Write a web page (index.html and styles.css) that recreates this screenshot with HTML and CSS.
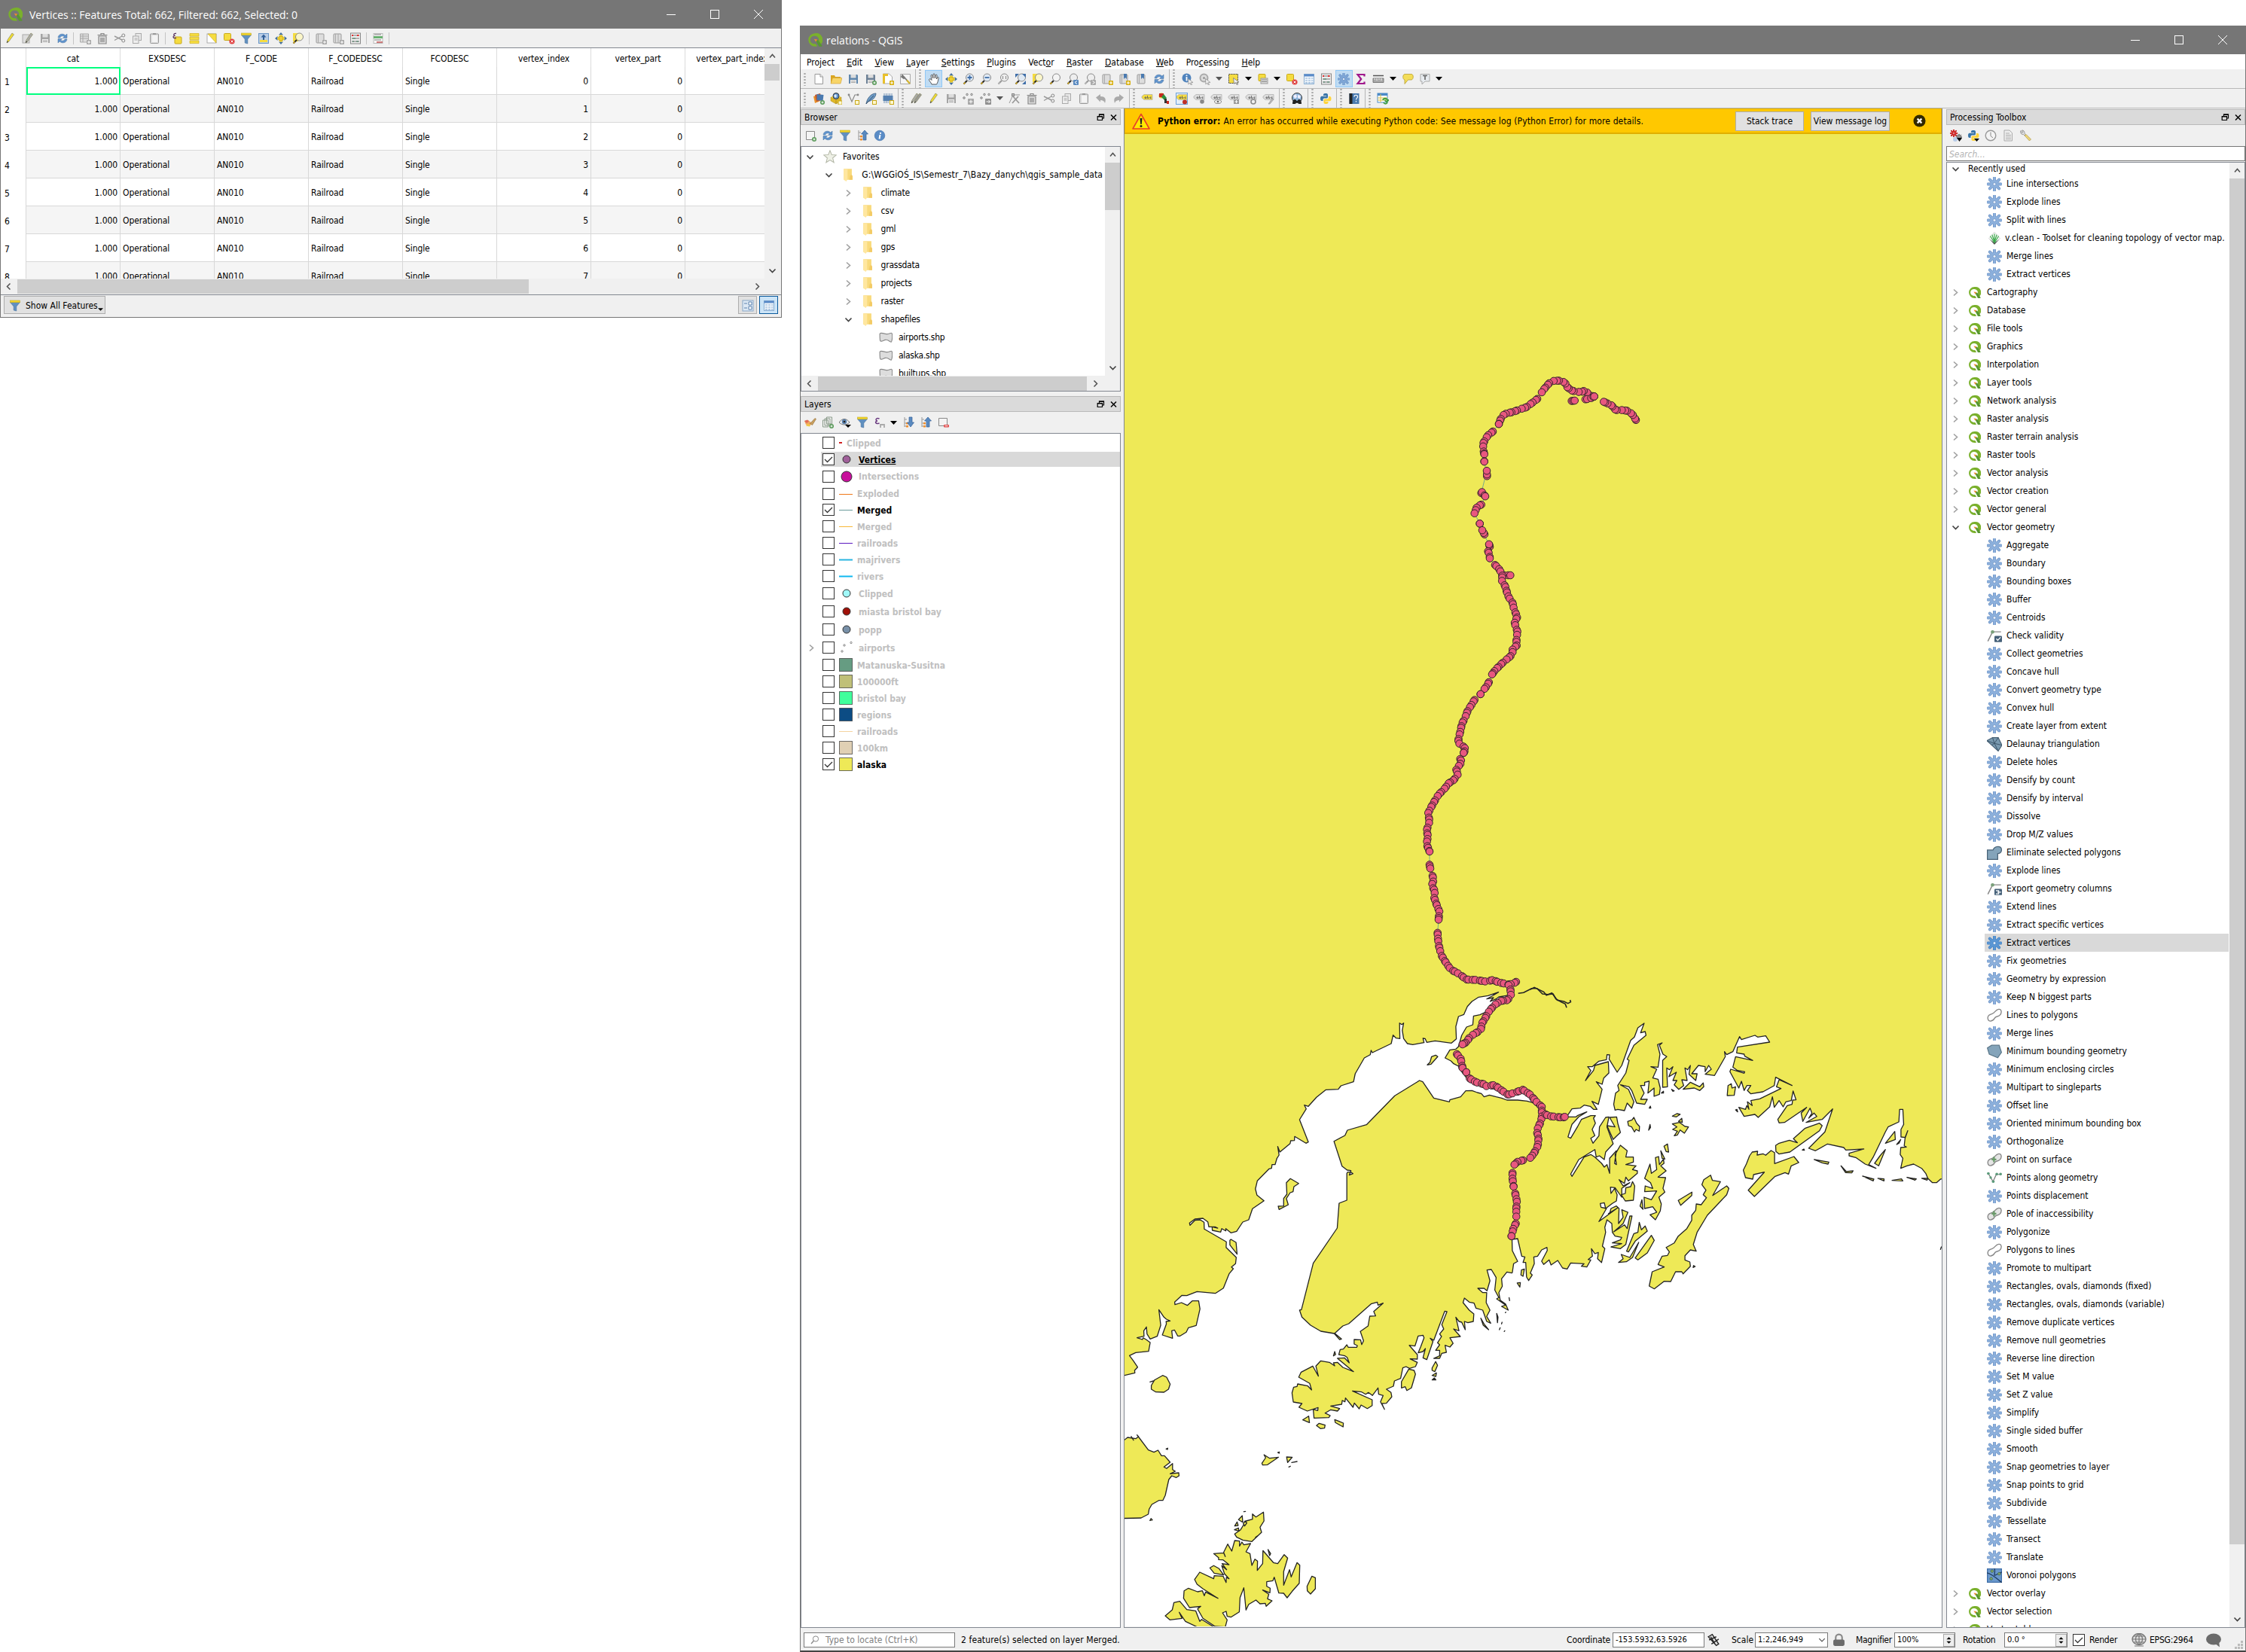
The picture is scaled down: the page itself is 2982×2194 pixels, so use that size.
FILE: index.html
```html
<!DOCTYPE html>
<html lang="en">
<head>
<meta charset="utf-8">
<title>relations - QGIS</title>
<link rel="stylesheet" href="styles.css">
</head>
<body>
<section class="window table-window">
  <header class="titlebar"><svg class="logo" viewBox="0 0 16 16"><use href="#q"/></svg><h1>Vertices :: Features Total: 662, Filtered: 662, Selected: 0</h1><div class="winbtns"><b class="min"></b><b class="max"></b><svg viewBox="0 0 12 12"><path d="M0 0L12 12M12 0L0 12" stroke="#fff" fill="none"/></svg></div></header>
  <div class="toolbar tb-table" data-tools="pencil multiedit savegray refresh | addrow trash cut copy paste | selexpr selall invert deselect filter top move zoomsel | newcol delcol abacus | cond |"></div>
  <div class="grid-frame">
    <div class="grid-view"><table class="grid"><thead></thead><tbody></tbody></table></div>
    <div class="vbar"><svg class="chev"><use href="#up"/></svg><div class="thumb t-table"></div><span class="grow"></span><svg class="chev"><use href="#down"/></svg></div>
  </div>
  <div class="hbar h-table"><svg class="chev"><use href="#left"/></svg><div class="thumb"></div><span class="grow"></span><svg class="chev"><use href="#right"/></svg></div>
  <footer class="table-foot"><button class="showall"><svg class="ic"><use href="#filter"/></svg><span>Show All Features</span><svg class="drop" viewBox="0 0 8 4"><path d="M0 0H8L4 4z"/></svg></button><span class="grow"></span><button class="mode"><svg class="ic"><use href="#form"/></svg></button><button class="mode on"><svg class="ic"><use href="#table"/></svg></button></footer>
</section>

<section class="window main-window">
  <header class="titlebar"><svg class="logo" viewBox="0 0 16 16"><use href="#q"/></svg><h1>relations - QGIS</h1><div class="winbtns"><b class="min"></b><b class="max"></b><svg viewBox="0 0 12 12"><path d="M0 0L12 12M12 0L0 12" stroke="#fff" fill="none"/></svg></div></header>
  <nav class="menu"><span>Pro<u>j</u>ect</span><span><u>E</u>dit</span><span><u>V</u>iew</span><span><u>L</u>ayer</span><span><u>S</u>ettings</span><span><u>P</u>lugins</span><span>Vect<u>o</u>r</span><span><u>R</u>aster</span><span><u>D</u>atabase</span><span><u>W</u>eb</span><span>Pro<u>c</u>essing</span><span><u>H</u>elp</span></nav>
  <div class="toolbar tb-main" data-tools=": new open save saveas layout style || pan* move zoomin zoomout zoom1 zoomfull zoomsel zoomlayer zoomprev zoomnext newmap newmark marks refresh || identify action ^g selrect ^ selform ^ deselect table abacus gearbox* sigma measure ^ tip textnote ^"></div>
  <div class="toolbar tb-main" data-tools=": dsm addvec vnew feather chip || multigray pencil savegray pts ptsadd ^g node trash cut copy paste undo redo || label diagram labelon lab1 lab2 lab3 lab4 lab5 || globe || python || help || sheet"></div>
  <div class="docks">
    <aside class="left">
      <div class="dock-title"><span>Browser</span><svg class="float"><use href="#float"/></svg><svg class="float"><use href="#x"/></svg></div>
      <div class="toolbar tb-dock" data-tools="addlayer refresh filter collapse info"></div>
      <div class="panel browser">
        <div class="row-flex">
          <div class="tree" id="browser"></div>
          <div class="vbar"><svg class="chev"><use href="#up"/></svg><div class="thumb t-browser"></div><span class="grow"></span><svg class="chev"><use href="#down"/></svg></div>
        </div>
        <div class="hbar h-browser"><svg class="chev"><use href="#left"/></svg><div class="thumb"></div><svg class="chev"><use href="#right"/></svg><span class="grow"></span></div>
      </div>
      <div class="dock-title layers-title"><span>Layers</span><svg class="float"><use href="#float"/></svg><svg class="float"><use href="#x"/></svg></div>
      <div class="toolbar tb-dock" data-tools="brush addgroup eye filter eps ^ expand collapse remove"></div>
      <div class="panel layers" id="layers"></div>
    </aside>
    <main class="canvas">
      <div class="message"><svg class="warn" viewBox="0 0 24 22"><path d="M12 1.500L23 21H1z" fill="#ffe900" stroke="#e8402a" stroke-width="1.600" stroke-linejoin="round"/><path d="M10.500 7h3l-.8 8h-1.400z" fill="#222"/><circle cx="12" cy="17.500" r="1.500" fill="#222"/></svg><p><b>Python error:</b><span>An error has occurred while executing Python code: See message log (Python Error) for more details.</span></p><span class="grow"></span><button class="b1">Stack trace</button><button class="b2">View message log</button><svg class="dismiss" viewBox="0 0 18 18"><circle cx="9" cy="9" r="8.500" fill="#332a00"/><path d="M6 6l6 6M12 6l-6 6" stroke="#fff" stroke-width="2.400"/></svg></div>
      <svg class="map" viewBox="1493 178 1085 1982" id="map"></svg>
    </main>
    <aside class="right">
      <div class="dock-title"><span>Processing Toolbox</span><svg class="float"><use href="#float"/></svg><svg class="float"><use href="#x"/></svg></div>
      <div class="toolbar tb-dock" data-tools="gears pydrop clock report wrench"></div>
      <div class="search">Search...</div>
      <div class="panel toolbox">
        <div class="tree" id="toolbox"></div>
        <div class="vbar"><svg class="chev"><use href="#up"/></svg><div class="thumb t-tool"></div><span class="grow"></span><svg class="chev"><use href="#down"/></svg></div>
      </div>
    </aside>
  </div>
  <footer class="status">
    <div class="field locate"><svg viewBox="0 0 12 12"><circle cx="7" cy="4.500" r="3.600" fill="none" stroke="#888"/><path d="M4.500 7L1 11" stroke="#888" stroke-width="1.300"/></svg>Type to locate (Ctrl+K)</div>
    <span class="s-msg">2 feature(s) selected on layer Merged.</span>
    <span class="s-coord">Coordinate</span><div class="field f-coord">-153.5932,63.5926</div>
    <svg class="ic s-ext" viewBox="0 0 16 16"><path d="M1 4l5-3 8 12-3 2zM2 8l9-4M5 13l9-6M4 4l6 10" stroke="#222" stroke-width="1.300" fill="#ddd"/></svg>
    <span class="s-scale">Scale</span><div class="field f-scale">1:2,246,949<svg viewBox="0 0 8 8"><path d="M1 2.500l3 3 3-3" fill="none" stroke="#555"/></svg></div>
    <svg class="ic s-lock" viewBox="0 0 16 16"><path d="M4 8V5a4 4 0 018 0v3" fill="none" stroke="#888" stroke-width="2"/><rect x="1" y="7.500" width="14" height="8" rx="2" fill="#6b6b6b"/></svg>
    <span class="s-mag">Magnifier</span><div class="field f-mag">100%<i class="spin"><svg viewBox="0 0 15 16"><path d="M4 6.500h7L7.500 3zM4 9.500h7L7.500 13z"/></svg></i></div>
    <span class="s-rot">Rotation</span><div class="field f-rot">0.0 °<i class="spin"><svg viewBox="0 0 15 16"><path d="M4 6.500h7L7.500 3zM4 9.500h7L7.500 13z"/></svg></i></div>
    <svg class="box s-box"><use href="#boxon"/></svg><span class="s-render">Render</span>
    <svg class="s-globe" viewBox="0 0 20 18"><ellipse cx="10" cy="8" rx="9" ry="7.500" fill="#ddd" stroke="#777" stroke-width="1.400"/><path d="M1 8h18M3 4h14M3 12h14M10 0v16M10 .5c-6 4-6 11 0 15M10 .5c6 4 6 11 0 15M4 17h12" stroke="#777" fill="none" stroke-width="1.200"/></svg><span class="s-epsg">EPSG:2964</span>
    <svg class="s-bubble" viewBox="0 0 20 19"><ellipse cx="10" cy="8" rx="10" ry="7.500" fill="#6b6b6b"/><path d="M11 13l7 5.500-1-8z" fill="#6b6b6b"/></svg>
    <span class="grow"></span><svg class="s-grip" viewBox="0 0 11 11"><path d="M8 0h3v3H8zM4 4h3v3H4zM8 4h3v3H8zM0 8h3v3H0zM4 8h3v3H4zM8 8h3v3H8z" fill="#bbb"/></svg>
  </footer>
</section>

<svg class="defs"><defs id="defs"></defs></svg>
<script src="app.js"></script>
</body>
</html>
```
FILE: styles.css
```css
* { box-sizing: border-box; }
body { margin: 0; width: 2982px; height: 2194px; overflow: hidden; background: #fff; display: flex; gap: 24px; align-items: flex-start; color: #000; font: 12px/14px "DejaVu Sans Condensed", "DejaVu Sans", "Noto Sans", sans-serif; font-stretch: condensed; }
button { font: inherit; color: inherit; padding: 1px 0 0; margin: 0; border: 1px solid #adadad; background: #e1e1e1; }
svg { display: block; flex: none; }
.defs { position: absolute; width: 0; height: 0; }
.grow { flex: 1; }
.window { background: #f0f0f0; display: flex; flex-direction: column; overflow: hidden; }
.table-window { width: 1038px; height: 422px; border: 1px solid #767676; border-top: 0; }
.main-window { width: 1920px; height: 2160px; margin-top: 34px; border-left: 1px solid #767676; border-right: 1px solid #767676; border-bottom: 2px solid #434343; }

.titlebar { height: 38px; flex: none; background: #767676; color: #fff; display: flex; align-items: center; padding-left: 9px; }
.titlebar h1 { margin: 0 0 0 9px; font: 400 14px/18px "Open Sans", "Noto Sans", sans-serif; flex: 1; white-space: nowrap; padding-top: 1px; }
.main-window .titlebar h1 { margin-left: 5px; }
.logo { width: 20px; height: 20px; }
.winbtns { display: flex; align-items: center; gap: 46px; padding-right: 24px; }
.winbtns .min { width: 12px; border-top: 1px solid #fff; }
.winbtns .max { width: 12px; height: 12px; border: 1px solid #fff; }
.winbtns svg { width: 12px; height: 12px; }

.toolbar { display: flex; align-items: center; flex: none; }
.tool { width: 23px; height: 23px; display: flex; align-items: center; justify-content: center; }
.tool.on { background: #c0dcf3; border: 1px solid #90c8f6; }
.ic, .tool svg { width: 16px; height: 16px; }
.tb-table { height: 26px; padding-left: 1px; border-bottom: 1px solid #828790; }
.bar { width: 7px; height: 16px; border-left: 1px solid #c4c4c4; margin-left: 3px; margin-right: -3px; }
.tb-main { height: 26px; border-bottom: 1px solid #b9b9b9; }
.grip { width: 12px; height: 18px; background: radial-gradient(circle at 50% 50%, #aaa 1px, transparent 1.400px) 4px 0 / 3px 4px repeat-y; }
.group { width: 15px; height: 25px; border-left: 1px solid #b5b5b5; margin-left: 2px; margin-right: -2px; background: radial-gradient(circle at 50% 50%, #aaa 1px, transparent 1.400px) 4px 3px / 3px 4px repeat-y; }
.tool.dd { width: 15.500px; }
.tool.dd svg { width: 9px; height: 5px; }
.tb-dock { height: 28px; padding-left: 1px; }

.grid-frame { display: flex; height: 306px; flex: none; }
.grid-view { width: 1014px; overflow: hidden; background: #fff; letter-spacing: -.1px; }
.grid { border-collapse: separate; border-spacing: 0; table-layout: fixed; width: 1034px; }
.grid th { font-weight: 400; height: 25px; padding: 2px 0 0; border-right: 1px solid #dcdcdc; white-space: nowrap; }
.grid td { height: 37px; padding: 2px 3px 0; border-right: 1px solid #d8d8d8; border-bottom: 1px solid #d8d8d8; width: 125px; }
.grid th:first-child, .grid td:first-child { width: 34px; border-bottom: 0; background: #fff; padding: 2px 5px 0; text-align: left; }
.grid tr:nth-child(even) td { background: #f5f5f5; }
.grid tr:nth-child(even) td:first-child { background: #fff; }
.grid .num { text-align: right; }
.grid .cur { outline: 2px solid #00ff7f; outline-offset: -2px; }

.vbar { width: 20px; flex: none; background: #f0f0f0; display: flex; flex-direction: column; align-items: center; padding: 5px 0; }
.chev { width: 11px; height: 11px; }
.thumb { background: #cdcdcd; }
.vbar .thumb { width: 100%; margin-top: 5px; }
.t-table { height: 22px; }
.t-browser { height: 63px; }
.t-tool { height: 1814px; }
.hbar { height: 20px; background: #f0f0f0; display: flex; align-items: center; flex: none; padding: 0 6px 0 5px; }
.hbar .thumb { height: 19px; margin: 0 6px; }
.h-table { border-bottom: 1px solid #828790; padding-right: 26px; height: 22px; }
.h-table .thumb { width: 679px; }
.h-browser .thumb { width: 357px; }
.table-foot { flex: 1; display: flex; align-items: flex-start; padding: 1px 4px 0 4px; gap: 3px; }
.showall { width: 135px; height: 24px; display: flex; align-items: center; padding-left: 6px; gap: 6px; position: relative; white-space: nowrap; }
.showall .drop { position: absolute; right: 2px; bottom: 3px; width: 7px; height: 4px; }
.mode { width: 25px; height: 24px; display: flex; align-items: center; justify-content: center; }
.mode.on { background: #cce4f7; border: 1px solid #0a5a9c; }

.menu { height: 20px; background: #fff; display: flex; align-items: center; padding: 2px 0 0 8px; gap: 16.300px; flex: none; }
.docks { flex: 1; display: flex; min-height: 0; padding-top: 1px; }
.left { width: 425px; display: flex; flex-direction: column; margin-right: 4px; }
.right { width: 397px; display: flex; flex-direction: column; margin-left: 5px; }
.dock-title { height: 21px; flex: none; background: #dadada; border: 1px solid #b9b9b9; display: flex; align-items: center; padding: 0 3px 0 4px; gap: 6px; }
.dock-title span { flex: 1; padding-top: 1px; }
.layers-title { margin-top: 6px; }
.float { width: 11px; height: 10px; }
.panel { background: #fff; border: 1px solid #828790; overflow: hidden; }
.browser { height: 326px; flex: none; display: flex; flex-direction: column; }
.row-flex { display: flex; height: 304px; }
.tree { flex: 1; overflow: hidden; }
.row { height: 24px; display: flex; align-items: center; white-space: nowrap; }
.row .chev { margin-right: 12px; }
.row .chev.none { visibility: hidden; }
.row .ic { margin-right: 8px; }
#browser { padding-top: 1px; }
#browser .row .ic { width: 18px; height: 18px; }
#browser .row:nth-child(2) span { letter-spacing: .14px; }
#browser .row:nth-child(n+3) span { letter-spacing: -.25px; }
.layers { flex: 1; }
.layer { display: flex; align-items: center; font-weight: 700; color: #c0c0c0; padding-left: 8px; white-space: nowrap; }
.layer span { padding-top: 1px; }
.layer.shown { color: #000; }
.layer.sel { background: linear-gradient(#d9d9d9, #d9d9d9) 26px 0 no-repeat; text-decoration: underline; }
.layer .chev { margin-right: 9px; }
.layer .chev.none { visibility: hidden; }
.box { width: 16px; height: 16px; }
.layer .sym { margin: 0 6px; width: 18px; height: 18px; }
.layer .sym.pt { margin: 0 7px; width: 18px; }
.layer .sym.tiny { width: 6px; margin: 0 5px; }

.canvas { flex: 1; display: flex; flex-direction: column; border-left: 1px solid #828790; border-right: 1px solid #828790; border-bottom: 1px solid #828790; min-width: 0; margin-top: -1px; }
.message { height: 34px; flex: none; background: #ffc800; border: 1px solid #e0af00; border-bottom-width: 2px; display: flex; align-items: center; padding: 0 20px 0 9px; letter-spacing: .12px; }
.warn { width: 24px; height: 22px; }
.message p { margin: 0 0 0 10px; padding-top: 1px; white-space: nowrap; }
.message p span { margin-left: 4px; }
.message button { height: 26px; letter-spacing: 0; }
.b1 { width: 91px; }
.message .b2 { width: 105px; margin-left: 9px; margin-right: 31px; white-space: nowrap; }
.dismiss { width: 17px; height: 17px; }
.map { width: 1085px; height: 1982px; background: #eee957; }
.land { fill: #eee957; stroke: #232323; stroke-width: 1.300; stroke-linejoin: round; }
.sea { fill: #fff; stroke: #232323; stroke-width: 1.300; stroke-linejoin: round; }
.rail { fill: none; stroke: #7aa98c; stroke-width: 1; }
.river { fill: none; stroke: #232323; stroke-width: 1.600; }
.vertex { fill: #e8577f; stroke: #33232a; stroke-width: 1; }

.search { height: 20px; flex: none; border: 1px solid #767676; background: #fff; color: #b4b4b4; font-style: italic; padding: 3px 3px 0; }
.toolbox { flex: 1; display: flex; margin-top: 1px; min-height: 0; }
#toolbox { overflow: hidden; }
#toolbox .row { flex: none; }
#toolbox .row.first { height: 16px; }
#toolbox .row .chev { margin-right: 11px; }
#toolbox .hit { background: #d9d9d9; }
#toolbox .cat .ic { width: 17px; height: 17px; margin-right: 8px; }
#toolbox .alg { margin-left: 50px; padding-left: 3px; margin-right: 1px; }
#toolbox .alg .ic { width: 20px; height: 19px; margin-right: 6px; }
#toolbox .alg:nth-child(5) { letter-spacing: .1px; }
#toolbox .alg:nth-child(5) .ic { margin-right: 4px; }

.status { height: 30px; flex: none; display: flex; align-items: center; padding: 2px 3px 0 4px; white-space: nowrap; }
.field { height: 20px; background: #fff; border: 1px solid #7a7a7a; display: flex; align-items: center; padding-left: 3px; font-size: 11px; }
.locate { width: 201px; color: #808080; padding-left: 8px; gap: 8px; font-size: 12px; }
.locate svg { width: 12px; height: 12px; }
.s-msg { width: 812px; padding-left: 8px; letter-spacing: .1px; }
.s-coord { width: 61px; letter-spacing: -.1px; }
.f-coord { width: 122px; }
.s-ext { margin: 0 15px 0 4px; }
.s-ext, .s-lock { width: 17px; height: 18px; }
.s-scale { width: 31px; }
.f-scale { width: 97px; justify-content: space-between; }
.f-scale svg { width: 10px; height: 10px; margin-right: 2px; }
.s-lock { margin: 0 14px 0 6px; }
.s-mag { width: 51px; letter-spacing: -.3px; }
.f-mag { width: 81px; justify-content: space-between; }
.spin { width: 15px; height: 17px; background: #eee; border: 1px solid #aaa; }
.spin svg { width: 13px; height: 15px; }
.s-rot { width: 65px; padding-left: 10px; letter-spacing: -.2px; }
.f-rot { width: 84px; justify-content: space-between; }
.s-box { margin: 0 6px 0 7px; }
.s-render { width: 56px; letter-spacing: -.2px; }
.s-globe { width: 20px; height: 18px; }
.s-epsg { width: 79px; padding-left: 4px; letter-spacing: -.2px; }
.s-bubble { width: 20px; height: 19px; }
.s-grip { width: 11px; height: 11px; align-self: flex-end; margin-bottom: 2px; }
```
FILE: app.js
```js
// Icon artwork, all on a 16 x 16 grid unless a viewBox is given.
const mag = (c, extra = '') => `<path d="M6 10L1.500 14.500" stroke="#2b2b2b" stroke-width="2.200"/><path d="M3.500 12.500l-2 2" stroke="#f0c020" stroke-width="1.500"/><circle cx="9.500" cy="6" r="5" fill="${c}" stroke="#888"/>${extra}`;
const disk = (a, extra = '') => `<path d="M2 2h11l1 1v11H2z" fill="${a}"/><rect x="4.500" y="2" width="7" height="4.500" fill="#ddd"/><rect x="4" y="9" width="8" height="5" fill="#eee"/><path d="M5 10.800h6M5 12.500h6" stroke="#999" stroke-width=".8"/>${extra}`;
const star = '<rect x="10" y="10" width="6" height="6" rx="1" fill="#d8b010"/><path d="M13 11v4M11 13h4" stroke="#fff"/>';
const gstar = '<rect x="10" y="10" width="6" height="6" rx="1" fill="#a8a8a8"/><path d="M13 11v4M11 13h4" stroke="#fff"/>';
const plus = '<circle cx="13" cy="13" r="3" fill="#5a9a5a"/><path d="M13 11.500v3M11.500 13h3" stroke="#fff"/>';
const teeth = [0, 45, 90, 135].map(a => `<path d="M8 1V15" transform="rotate(${a} 8 8)"/>`).join('');
const gear = (c, d) => `<g stroke="${d}" stroke-width="3.200" stroke-linecap="round">${teeth}</g><circle cx="8" cy="8" r="4.600" fill="${d}"/><g stroke="${c}" stroke-width="2.200" stroke-linecap="round">${teeth}</g><circle cx="8" cy="8" r="4.200" fill="${c}"/><circle cx="8" cy="8" r="1.600" fill="#eef4fb" stroke="${d}" stroke-width=".7"/>`;
const tag = (c, e = '') => `<path d="M1 5l3-2.500h11v7H4L1 7z" fill="${c}" stroke="#aaa" stroke-width=".7"/><path d="M5 6h2v1.500H5zM8.500 4v3.500h1.500V6M13.500 6H12v1.500h1.500" fill="none" stroke="#555" stroke-width=".8"/>${e}`;
const doc = e => `<rect x="2" y="2" width="10" height="12" rx="1" fill="#ddd" stroke="#999"/><path d="M4.500 2v12" stroke="#aaa"/>${e}`;
const py = '<path d="M8 1C5 1 5 2 5 4h4v.8H3C1.500 5 1 6 1 8s.7 3 2 3h1.500V9.500C4.500 8 5.500 7.500 7 7.500h2.500C11 7.500 11 6.500 11 5V3C11 1.500 10 1 8 1z" fill="#3a75a8"/><path d="M8.500 15c3 0 3-1 3-3h-4v-.8h6c1.500-.2 2-1.200 2-3.200s-.7-3-2-3H12v1.500C12 8 11 8.500 9.500 8.500H7C5.500 8.500 5.500 9.500 5.500 11v2c0 1.500 1 2 3 2z" fill="#ffd43b"/>';
const pen = (c, x = 0) => `<path d="M${3 + x} 14l1-4L${10 + x} 1l2.500 1.800-6.500 9z" fill="${c}" stroke="#8a8a60" stroke-width=".7"/><path d="M${3 + x} 14l.6-2.400 1.600 1z" fill="#333"/>`;
const blob = f => `<path d="M1 11.500C.5 7.500 3.500 7 6 6S9 1.800 12.500 1.200 16 6 13.500 8s-4 .5-5.500 3.500S1.500 16 1 11.500z" fill="${f}" stroke="#888" stroke-width="1.100"/>`;
const nodeBadge = e => `<path d="M1 14L6 3.500H15" stroke="#888" stroke-width="1.200" fill="none"/><circle cx="6" cy="3.500" r="1.900" fill="#7aa07a"/><rect x="8" y="8" width="8" height="7" rx="1" fill="#456078"/>${e}`;
const arrowBox = d => `<path d="M3 1v13M3 4h3M3 9h3M3 13h3" stroke="#999" fill="none"/><path d="M5 8h3v2.500H5zM5 12h3v2.500H5z" fill="#f09030"/><path d="${d}" fill="#5a8ac0" stroke="#36629a" stroke-width=".7"/>`;
const icons = {
  q: '<path d="M8 1a7 7 0 100 14 7 7 0 002.500-.5l-2-2.600A4.200 4.200 0 118 3.800a4.200 4.200 0 013.600 6.300L14 13A7 7 0 008 1z" fill="#7ab02c"/><path d="M8.500 8l3 .2L15.500 14v1h-3.300z" fill="#589632"/><path d="M7 7l3.500.5L9 10z" fill="#f08a30"/>',
  gear: gear('#8cb0dc', '#6d92c4'), geardark: gear('#5b97d4', '#3f7fc0'), gearbox: gear('#7ea6d6', '#5d86bc'),
  filter: '<path d="M1.500 3.500h13L9.800 9v6l-3.600-1V9z" fill="#6090c0" stroke="#44709e" stroke-width=".6"/><rect x="1.500" y="1" width="13" height="2.800" fill="#f3d72c" stroke="#b8a020" stroke-width=".5"/>',
  refresh: '<path d="M2 7C2.500 3 6 1.500 9.500 2.500L12 4l2-2v5.500H8.500l2-1.800C8 4 5.500 5 5 7zM14 9c-.5 4-4 5.500-7.500 4.500L4 12l-2 2V8.500h5.500l-2 1.800C8 12 10.500 11 11 9z" fill="#5f93cd" stroke="#47709e" stroke-width=".5"/>',
  pencil: pen('#f0dc30'), multiedit: '<rect x="1" y="3" width="9" height="11" fill="#ddd" stroke="#aaa"/>' + pen('#aaa', 2), multigray: pen('#aaa', -2) + pen('#999', 2),
  savegray: disk('#a4a4a4'), save: disk('#5f86ac'), saveas: disk('#6d8196', plus),
  addrow: '<path d="M1.500 2h11v11h-11zM1.500 5h11M1.500 8h11M5 2v11" fill="#ddd" stroke="#aaa"/>' + gstar,
  trash: '<path d="M3 5h10v10H3z" fill="#ddd" stroke="#888" stroke-width="1.200"/><path d="M1.500 3.500h13M6 3V1.500h4V3M6 7v6M8 7v6M10 7v6" stroke="#888" stroke-width="1.200" fill="none"/>',
  cut: '<path d="M1 5l10 5M1 10.500L11 5" stroke="#999" stroke-width="1.400"/><circle cx="12.800" cy="4" r="2" fill="none" stroke="#888"/><circle cx="12.800" cy="11" r="2" fill="none" stroke="#888"/>',
  copy: '<rect x="6" y="1.500" width="7.500" height="9" fill="#e8e8e8" stroke="#aaa"/><rect x="2.500" y="5" width="7.500" height="9.500" fill="#eee" stroke="#aaa"/><path d="M4.500 8h4M4.500 10h4" stroke="#aaa"/>',
  paste: '<rect x="2.500" y="2" width="11" height="12.500" rx="1" fill="#ddd" stroke="#999"/><rect x="5" y="4" width="7" height="9" fill="#f4f4f4"/><path d="M6 1h4v2H6z" fill="#999"/>',
  selexpr: '<rect x="5" y="6" width="9" height="9" rx="1" fill="#f5dc40" stroke="#c8a818"/><path d="M7 1.500C3 1 3 4 5.500 4.300 2 4.500 2 8.500 7 7.500" fill="none" stroke="#5a3560" stroke-width="1.300"/>',
  selall: '<path d="M2 1.500h12v3.600H2zM2 6.200h12v3.600H2zM2 11h12v3.600H2z" fill="#f5dc40" stroke="#d0b020" stroke-width=".7"/>',
  invert: '<rect x="2" y="2" width="12" height="12" fill="#fff" stroke="#999" stroke-width=".8"/><path d="M3 2h11v12z" fill="#f5dc40" stroke="#c8a818" stroke-width=".6"/>',
  deselect: '<rect x="1.500" y="1.500" width="9" height="9" rx="1" fill="#f5dc40" stroke="#c8a818"/><circle cx="12" cy="12" r="3.600" fill="#e04040"/><path d="M10.500 10.500l3 3M13.500 10.500l-3 3" stroke="#fff"/>',
  top: '<rect x="1.500" y="1.500" width="13" height="13" fill="#b9cde6" stroke="#6c98c8"/><rect x="3" y="10" width="10" height="3" fill="#f5dc40"/><path d="M8 2.500l3.500 4H9V10H7V6.500H4.500z" fill="#336099"/>',
  move: '<path d="M5.500 5.500h5v5h-5z" fill="#f0d030" stroke="#b89c20"/><path d="M8 0l3 3.600H5zM8 16l3-3.600H5zM0 8l3.600-3v6zM16 8l-3.600-3v6z" fill="#44709e"/><path d="M6 3.500h4v2H6zM6 10.500h4v2H6zM3.500 6h2v4h-2zM10.500 6h2v4h-2z" fill="#f0d030"/>',
  zoomsel: '<rect x="1" y="1" width="7" height="11" fill="#f5dc40"/>' + mag('#fbf6c8'), zoomlayer: mag('#f4f4f4'),
  zoomin: mag('#dfe9f4', '<path d="M9.500 3v6M6.500 6h6" stroke="#3f6ea8" stroke-width="1.800"/>'), zoomout: mag('#dfe9f4', '<path d="M6.500 6h6" stroke="#3f6ea8" stroke-width="1.800"/>'),
  zoom1: mag('#eee', '<path d="M7.500 4v4M11.500 4v4" stroke="#888"/>').replace('#2b2b2b', '#999').replace('#f0c020', '#bbb'),
  zoomfull: mag('#dfe9f4', '<path d="M1 1h5L1 6zM15 1v5l-5-5zM15 15h-5l5-5z" fill="#3f6ea8"/>'),
  zoomprev: mag('#eee', '<rect x="9" y="9" width="7" height="7" rx="1" fill="#5a8ac0"/><path d="M14 10.500l-3 2 3 2" stroke="#fff" fill="none"/>'),
  zoomnext: mag('#eee', '<rect x="9" y="9" width="7" height="7" rx="1" fill="#aaa"/><path d="M11.500 10.500l3 2-3 2" stroke="#fff" fill="none"/>').replace('#2b2b2b', '#999').replace('#f0c020', '#bbb'),
  newcol: doc('') + gstar, delcol: doc('<path d="M8 2v12" stroke="#aaa"/>') + gstar,
  abacus: '<rect x="1.500" y="1" width="13" height="14" fill="#eee" stroke="#888"/><path d="M3 4h10M3 8h10M3 12h10" stroke="#777"/><path d="M3 3h2v2H3zM10 3h2.500v2H10z" fill="#e03030"/><path d="M4 7h4v2H4zM4 11h2v2H4zM9 11h3v2H9z" fill="#7a9a8a"/>',
  cond: '<rect x="2" y="1.500" width="12" height="13" fill="#f8f8f8" stroke="#bbb"/><path d="M2 5h12v3H2z" fill="#69b070"/><path d="M3 3h9M3 10h9" stroke="#777"/><path d="M6 13h8" stroke="#c05050" stroke-width="1.500"/>',
  form: '<rect x="1" y="1" width="14" height="14" fill="#dce8f4" stroke="#8aa8c8"/><path d="M9 3h4v4H9zM9 9h4v4H9z" fill="#fff" stroke="#5a80ac"/><path d="M3 5h4M3 11h4" stroke="#5a80ac"/>',
  table: '<rect x="1.500" y="1.500" width="13" height="13" fill="#f2f7fc" stroke="#8aaed2"/><rect x="1.500" y="1.500" width="13" height="3" fill="#5a8ac8"/><path d="M3 7h3M7 7h3M11 7h2.500M3 10h3M7 10h3M11 10h2.500M3 12.800h3M7 12.800h3M11 12.800h2.500" stroke="#8aaed2" stroke-width="1.200"/>',
  new: '<path d="M3 1.500h7l3.500 3.500v9.500H3z" fill="#fff" stroke="#999"/><path d="M10 1.500V5h3.500" fill="#eee" stroke="#999"/>',
  open: '<path d="M1 3h5l1 2h7v9H1z" fill="#d9a520"/><path d="M3.500 6.500H16L14 14H1z" fill="#f8d568" stroke="#d0a030" stroke-width=".6"/>',
  layout: '<path d="M1.500 1h8l4 4v9h-12z" fill="#fff" stroke="#aaa"/><path d="M1 1h7v3H4v10H1z" fill="#e8c02c"/>' + star,
  style: '<path d="M1.500 1.500h13v13h-13z" fill="#f6f6f6" stroke="#aaa"/><path d="M4 3l3 3-1 1-3-2zM7 6l6 7" stroke="#777" stroke-width="1.800" fill="none"/><path d="M10 9.500l4 4.500" stroke="#d8b830" stroke-width="2"/>',
  pan: '<path d="M5 15c-1-3-4-5-3.500-6.500S4 8 5 9.500L4 3.500c0-1.500 1.800-1.500 2 0L6.800 7 7 2c.1-1.500 2-1.500 2 0l.3 5 1-4c.4-1.400 2-1 1.800.5L11.500 8l1-2c.7-1.200 2-.5 1.700.7C13.500 10 13 13 11.500 15z" fill="#fff" stroke="#333" stroke-width=".8"/>',
  newmap: doc('') + star, newmark: doc('<path d="M7 1h4v7L9 6 7 8z" fill="#4a7ab0"/>') + star, marks: doc('<path d="M7 1h4v7L9 6 7 8z" fill="#4a7ab0"/>'),
  identify: '<circle cx="6.500" cy="6.500" r="6" fill="#4f83bd"/><path d="M6.500 5v5.500M6.500 2.500v1.600" stroke="#fff" stroke-width="1.800"/><path d="M8.500 7.500l6.500 5-3 .3 1.500 2.700-1.300.4-1.200-2.700-2.200 1.600z" fill="#eee" stroke="#888" stroke-width=".7"/>',
  action: '<circle cx="6.500" cy="6.500" r="5" fill="#ddd" stroke="#aaa" stroke-width="2"/><circle cx="6.500" cy="6.500" r="1.500" fill="#999"/><path d="M8.500 7.500l6.500 5-3 .3 1.500 2.700-1.300.4-1.200-2.700-2.200 1.600z" fill="#eee" stroke="#888" stroke-width=".7"/>',
  selrect: '<rect x="1.500" y="1.500" width="12" height="12" fill="#f5dc40" stroke="#444" stroke-dasharray="2 1"/><path d="M7.500 6.500l7.500 5.500-3 .3 1.500 3-1.300.4-1.500-3-2.200 1.600z" fill="#eee" stroke="#777" stroke-width=".8"/>',
  selform: '<rect x="2" y="1.500" width="9" height="9" rx="1" fill="#f5dc40" stroke="#c8a818"/><rect x="5" y="7" width="9" height="7" fill="#ddd" stroke="#999"/><path d="M6 9h7M6 11.500h7" stroke="#888"/>',
  sigma: '<path d="M12.500 4.500V2H3.500l4.700 6-4.700 6h9v-2.500" fill="none" stroke="#a0188c" stroke-width="2.200"/>',
  measure: '<path d="M1 3.500h14" stroke="#555" stroke-width="1.500"/><path d="M1 7h14v5.500H1z" fill="#aaa" stroke="#666" stroke-width=".8"/><path d="M3 7v2M6 7v3M9 7v2M12 7v3" stroke="#eee"/>',
  tip: '<path d="M4 1.500h9c3 0 3 7 0 7.500H8.500L4 14.500V9C1 8.500 1 2 4 1.500z" fill="#f3dd58" stroke="#b8a030" stroke-width=".8"/>',
  textnote: '<path d="M2 1.500h12v9.500H8L4 15v-4H2z" fill="#e8ecf0" stroke="#aaa"/><path d="M5 3.500h6M8 3.500V9" stroke="#666" stroke-width="1.600"/>',
  dsm: '<path d="M1 5l7-2 2 8-7 3z" fill="#e89028"/><path d="M3 3l7-2 2 9-7 2z" fill="#c05830"/><path d="M5.500 2l9 1-1 8-8-1z" fill="#4a7ab0"/>' + plus,
  addvec: '<path d="M1 6l7-3 7 3-7 4z" fill="#f0d040"/><path d="M1 6v5l7 4v-5zM15 6v5l-7 4v-5z" fill="#e0b828" stroke="#a88820" stroke-width=".5"/><circle cx="8" cy="4.500" r="4" fill="#5f93cd" stroke="#333"/><path d="M5 4l3-2 1 3-2 2z" fill="#dce8f4"/><rect x="11" y="11" width="5" height="5" fill="#fff8d0" stroke="#c8a818"/>',
  vnew: '<path d="M2 3l4 9 4-9h4" fill="none" stroke="#888" stroke-width="1.200"/><circle cx="2" cy="3" r="1.400" fill="#888"/><circle cx="14" cy="3" r="1.400" fill="#888"/><rect x="10.500" y="10.500" width="5" height="5" fill="#fff8d0" stroke="#c8a818"/>',
  feather: '<path d="M2 15C3 8 8 1 15 1c0 5-5 10-11 11z" fill="#6f9cc6" stroke="#3a5a7c" stroke-width=".8"/><path d="M2 15L12 4" stroke="#27425e" stroke-width=".8"/><rect x="10.500" y="10.500" width="5" height="5" fill="#fff8d0" stroke="#c8a818"/>',
  chip: '<path d="M3 1v13M5.500 1v13M8 1v13M10.500 1v13M13 1v13" stroke="#6f8fb4"/><rect x="1.500" y="4" width="13" height="7" fill="#5580b0"/><rect x="10.500" y="10.500" width="5" height="5" fill="#fff8d0" stroke="#c8a818"/>',
  pts: '<g fill="#ccc" stroke="#888"><circle cx="2" cy="7" r="1.300"/><circle cx="6" cy="2.500" r="1.300"/><circle cx="12" cy="2.500" r="1.300"/></g><rect x="7" y="8" width="8" height="8" rx="1" fill="#a8a8a8"/><path d="M11 9.500v5M8.500 12h5" stroke="#fff"/>',
  ptsadd: '<g fill="#ccc" stroke="#888"><circle cx="2" cy="7" r="1.300"/><circle cx="6" cy="2.500" r="1.300"/><circle cx="12" cy="2.500" r="1.300"/></g><rect x="7" y="8" width="8" height="8" rx="1" fill="#909090"/><path d="M8.500 12h5M11.500 10l2 2-2 2" stroke="#fff" fill="none"/>',
  node: '<path d="M1 14L6 3h9" stroke="#999" fill="none"/><path d="M6 5l8 9M13 5l-8 9" stroke="#999" stroke-width="1.700"/><rect x="4.500" y="1.500" width="3" height="3" fill="#bbb" stroke="#888"/>',
  undo: '<path d="M1 6.500L7 2v3c6 0 8 3 6 9-1-3-3-4-6-4v2.500z" fill="#aaa"/>', redo: '<path d="M15 6.500L9 2v3c-6 0-8 3-6 9 1-3 3-4 6-4v2.500z" fill="#aaa"/>',
  label: tag('#f5dc40'), diagram: '<circle cx="4" cy="4" r="3.500" fill="#e8c820"/><path d="M1 1h6v5H1z" fill="#c82820"/><path d="M7 2l4 5-3 3-4-4z" fill="#2c9040"/><path d="M8 8h3v6H8z" fill="#333"/><path d="M11 11h3v4h-3z" fill="#c82820"/>',
  labelon: '<rect x=".5" y=".5" width="15" height="15" fill="#e4eef8" stroke="#6aa0dc"/>' + tag('#f5dc40', '<circle cx="12" cy="12.500" r="3" fill="#c03028"/>'),
  lab1: tag('#ddd', '<circle cx="12" cy="12" r="2.800" fill="#888"/>'), lab2: tag('#ddd', '<ellipse cx="10" cy="12" rx="4.500" ry="2.500" fill="#eee" stroke="#888"/><circle cx="10" cy="12" r="1.300" fill="#666"/>'),
  lab3: tag('#ddd', '<rect x="8" y="9" width="7" height="6" fill="#999"/><path d="M9.500 12h4M11.500 10v4" stroke="#fff"/>'), lab4: tag('#ddd', '<circle cx="11" cy="12" r="3" fill="none" stroke="#888" stroke-width="1.600"/>'), lab5: tag('#ddd', '<path d="M8 15l5-7 2 1-5 6z" fill="#bbb" stroke="#888" stroke-width=".6"/>'),
  globe: '<circle cx="8" cy="7" r="6.500" fill="#8db4da" stroke="#333"/><path d="M3 4l4-2 1 4-3 2zM9 3l4 1-1 4-3-1z" fill="#eef"/><path d="M2 15c0-4 1-6 3-6s2 2 3 2 1-2 3-2 3 2 3 6h-4l-1-2H7l-1 2z" fill="#222"/>',
  python: py, pydrop: py + '<path d="M9 12h7l-3.500 4z"/>',
  help: '<rect x="1.500" y="1" width="13" height="14" fill="#4a7ab0"/><rect x="1.500" y="1" width="4" height="14" fill="#222"/><path d="M8 5.500c0-3 4.500-3 4.500 0 0 2-2 1.800-2 4M10.500 11v1.600" stroke="#fff" fill="none" stroke-width="1.200"/>',
  sheet: '<rect x="1" y="1" width="13" height="12" fill="#fff" stroke="#4a8ac8"/><path d="M1 2.500h13" stroke="#4a8ac8" stroke-width="3"/><path d="M1 7h13M1 10h13M5 2v11" stroke="#e0c040"/><path d="M8 10c1-3 5-3 6 0h1.500l-2.500 2.500L10.500 10M14 13c-1 2.500-4 2.500-5 0" fill="none" stroke="#40a040" stroke-width="1.800"/>',
  addlayer: '<path d="M2.500 2.500h11v11h-11z" fill="#f4f4f4" stroke="#888"/>' + plus,
  collapse: arrowBox('M11 1l4.500 5H13v8H9V6H6.500z'), expand: arrowBox('M9 1h4v7h2.500L11 14 6.500 8H9z'),
  info: '<circle cx="8" cy="8" r="6.800" fill="#5a8cc6" stroke="#3f6ea8" stroke-width=".6"/><path d="M8.500 7L7.500 12.500M9 4v1.800" stroke="#fff" stroke-width="2"/>',
  brush: '<path d="M0 6l5-1 5 4-3 4-5-2z" fill="#f0a860"/><path d="M0 6l4-1.500 2 2-3 2.500z" fill="#e06858"/><path d="M4 10l4 1-1 2.500-5-1z" fill="#f0c848"/><path d="M7.500 9.500l6.500-7 1.500 1-5 8z" fill="#c8a060" stroke="#805820" stroke-width=".5"/>',
  addgroup: '<path d="M1.500 5h7v9h-7zM4 3h7v9H4zM6.500 1h7v9h-7z" fill="none" stroke="#8a9a8a"/>' + plus,
  eye: '<path d="M0 8c4-6 10-6 14 0-4 4-10 4-14 0z" fill="#e8eef4" stroke="#777"/><circle cx="7" cy="7" r="3.200" fill="#5a80ac"/><circle cx="7" cy="7" r="1.300" fill="#222"/><path d="M8 11h8l-4 4z"/>',
  eps: '<path d="M7.500 3C3 1 1.500 5.500 5 6 1 6.500 2 11 7.500 9" fill="none" stroke="#6a3a80" stroke-width="1.500"/><path d="M9 15v-4h5v4" fill="none" stroke="#aaa" stroke-width="1.800"/>',
  remove: '<path d="M2.500 2.500h11v10h-11z" fill="#f4f4f4" stroke="#888"/><rect x="9" y="11" width="7" height="3.500" rx="1" fill="#e04848"/><path d="M10.500 12.700h4" stroke="#fff"/>',
  gears: '<g transform="scale(.62)">' + gear('#d83030', '#b02020') + '</g><g transform="translate(8 6) scale(.5)">' + gear('#888', '#666') + '</g><circle cx="7" cy="13" r="3" fill="#b8cce8"/><path d="M9 11h7l-3.500 5z"/>',
  clock: '<circle cx="8" cy="8" r="6.800" fill="#f4f4f4" stroke="#999" stroke-width="1.400"/><path d="M8 3.500V8.500l3 2.500" stroke="#888" fill="none"/>',
  report: '<path d="M3 1h7l3.500 3.500V15H3z" fill="#eee" stroke="#aaa"/><path d="M5 5h5M5 7.500h7M5 10h7M5 12.500h7" stroke="#aaa"/>',
  wrench: '<path d="M2 1.500C1 5 3 7 5.500 6.500L7 8l1.500-1.500L7 5C7.500 2.500 5 .5 3.500 1L5 3 3.500 4.500z" fill="#ddd" stroke="#888" stroke-width=".8"/><path d="M7 8l6.500 7 2-2L9 6.500z" fill="#f0d878" stroke="#a89040" stroke-width=".7"/>',
  star: '<path d="M8 .8l2 5 5.400.3-4.200 3.500 1.400 5.300L8 12l-4.600 2.900 1.400-5.300L.6 6.100 6 5.800z" fill="#eef0e6" stroke="#b4b8a8" stroke-width=".9"/>',
  folder: '<path d="M2 1h9.500v8l.9.800V14H2z" fill="#f9da7c"/><path d="M9.500 9l2-1 .9 1.800V14H8.500z" fill="#f3cb66"/><path d="M2 1l4.500.8V13L5 16l-3-2z" fill="#ffe7a0"/>',
  shape: '<path d="M1 5C.5 2 4 3 8 4s7-3 7.500 0 0 9-1 9.500-4-3.500-7-2.500-5.500 2.500-6 1S1 8 1 5z" fill="#ddd" stroke="#888"/>',
  grass: '<path d="M8 1l6 7-6 7-6-7z" fill="#f4f8f4" stroke="#ccc" stroke-width=".6"/><path d="M3 9l5 6 5-6-5 4z" fill="#444"/><path d="M8 13V3M8 13L3.500 5.500M8 13l4.500-7.500M8 12L5.500 4M8 12l2.500-8" stroke="#3aa84a" stroke-width=".9"/>',
  check: nodeBadge('<path d="M10 11l1.500 2 3-3.500" stroke="#fff" fill="none"/>'), export: nodeBadge('<path d="M9.500 10h3v3.500h-3M11 11.700h4" stroke="#fff" fill="none"/>'),
  delaunay: '<path d="M0 4l6-3.500h6L16 9l-4 6.500z" fill="#7a9ab0" stroke="#4a6478"/><path d="M0 4l8 3 4-6.500M8 7l-2-6.500M8 7l8 2M8 7l4 8.500M8 7l-3 2" stroke="#3c5468" fill="none" stroke-width=".8"/>',
  bound: '<path d="M.5 4L5 1h8l2.500 8-4 6-9-4z" fill="#84a4ba" stroke="#5a7688"/>',
  elim: '<path d="M.5 5h6C8 0 15 0 15.500 4S13 9 11.500 9v6.500H.5z" fill="#84a4ba" stroke="#4a6478"/>',
  lines: blob('#fff'), surface: blob('#e4e4e4') + '<path d="M7.500 4.500v6M5 7.500h5" stroke="#6a9a6a" stroke-width="1.800"/>',
  along: '<path d="M1.500 3l5 9L10 4h5" fill="none" stroke="#777"/><g fill="#5a9a7a"><circle cx="1.500" cy="3" r="1.500"/><circle cx="4" cy="7.500" r="1.300"/><circle cx="6.700" cy="12" r="1.500"/><circle cx="10.500" cy="3.500" r="1.500"/><circle cx="14.500" cy="3.500" r="1.500"/></g>',
  voronoi: '<rect x=".5" y=".5" width="15" height="15" fill="#6a98cc" stroke="#3f6ea8"/><path d="M0 5c5 1 9 5 16 11M8 0c1 3 0 5 0 8M8 8l8-4" stroke="#1e3c60" fill="none"/><g fill="#8ab070" stroke="#3a5a30" stroke-width=".6"><circle cx="5.500" cy="3" r="1.400"/><circle cx="13" cy="6" r="1.400"/><circle cx="4.500" cy="11.500" r="1.400"/></g>',
  dd: ['0 0 9 5', '<path d="M0 0h9L4.500 5z" fill="#000"/>'], ddg: ['0 0 9 5', '<path d="M0 0h9L4.500 5z" fill="#555"/>'],
  up: ['0 0 11 11', '<path d="M2 7.500l3.500-4 3.500 4" fill="none" stroke="#505050" stroke-width="1.500"/>'],
  down: ['0 0 11 11', '<path d="M1.500 3.500l4 4 4-4" fill="none" stroke="#404040" stroke-width="1.600"/>'],
  left: ['0 0 11 11', '<path d="M7.500 1.500l-4 4 4 4" fill="none" stroke="#505050" stroke-width="1.500"/>'],
  right: ['0 0 11 11', '<path d="M3.500 1.500l4 4-4 4" fill="none" stroke="#505050" stroke-width="1.500"/>'],
  closed: ['0 0 11 11', '<path d="M3 1.500l4.500 4-4.500 4" fill="none" stroke="#a0a0a0" stroke-width="1.600"/>'],
  float: ['0 0 11 10', '<path d="M3.500 3V.8h6V6H7.500M1.200 3.500h6.300v5H1.200zM1 4h6M4 1.500h6" fill="none" stroke="#000" stroke-width="1.200"/>'],
  x: ['0 0 11 10', '<path d="M2 1.500l7 7M9 1.500l-7 7" stroke="#000" stroke-width="1.500"/>'],
  boxoff: '<rect x=".5" y=".5" width="15" height="15" fill="#fff" stroke="#333"/>', boxon: '<rect x=".5" y=".5" width="15" height="15" fill="#fff" stroke="#333"/><path d="M3 8l3.500 3.500L13 5" fill="none" stroke="#333" stroke-width="1.300"/>'
};
document.getElementById('defs').innerHTML = Object.entries(icons).map(([k, v]) => {
  const [vb, body] = Array.isArray(v) ? v : ['0 0 16 16', v];
  return `<symbol id="${k}" viewBox="${vb}" preserveAspectRatio="none">${body}</symbol>`;
}).join('');
const use = (id, cls) => `<svg class="${cls}"><use href="#${id}"/></svg>`;

// Toolbars: ":" grip, "|" divider, "||" new group, "^" menu arrow, "*" pressed.
document.querySelectorAll('[data-tools]').forEach(bar => {
  bar.innerHTML = bar.dataset.tools.split(' ').map(t => {
    if (t === ':') return '<span class="grip"></span>';
    if (t === '|') return '<span class="bar"></span>';
    if (t === '||') return '<span class="group"></span>';
    if (t[0] === '^') return `<span class="tool dd">${use('dd' + t.slice(1), '')}</span>`;
    const on = t.endsWith('*');
    return `<span class="tool${on ? ' on' : ''}">${use(t.replace('*', ''), '')}</span>`;
  }).join('');
});

// Attribute table
document.querySelector('.grid thead').innerHTML = '<tr>' + ['', 'cat', 'EXSDESC', 'F_CODE', 'F_CODEDESC', 'FCODESC', 'vertex_index', 'vertex_part', 'vertex_part_index'].map(h => `<th>${h}</th>`).join('') + '</tr>';
document.querySelector('.grid tbody').innerHTML = [1, 2, 3, 4, 5, 6, 7, 8].map(n => `<tr><td>${n}</td><td class="num${n === 1 ? ' cur' : ''}">1.000</td><td>Operational</td><td>AN010</td><td>Railroad</td><td>Single</td><td class="num">${n - 1}</td><td class="num">0</td><td></td></tr>`).join('');

// Browser tree
document.getElementById('browser').innerHTML = [[0, 'down', 'star', 'Favorites'], [1, 'down', 'folder', 'G:\\WGGiOŚ_IS\\Semestr_7\\Bazy_danych\\qgis_sample_data'],
  ...['climate', 'csv', 'gml', 'gps', 'grassdata', 'projects', 'raster'].map(n => [2, 'closed', 'folder', n]), [2, 'down', 'folder', 'shapefiles'],
  ...['airports', 'alaska', 'builtups'].map(n => [3, '', 'shape', n + '.shp'])
].map(([d, c, i, t]) => `<div class="row" style="padding-left:${6 + d * 25.3 - (d === 3 ? 2 : 0)}px">${use(c || 'closed', 'chev' + (c ? '' : ' none'))}${use(i, 'ic')}<span>${t}</span></div>`).join('');

// Layer list: [name, row height, visible, symbol kind, colour, radius]
const layers = [['Clipped', 24, 0, 'tiny', '#d02020'], ['Vertices', 20, 1, 'pt', '#a0609a', 5], ['Intersections', 25, 0, 'pt', '#c8109c', 7], ['Exploded', 21, 0, 'ln', '#f07818'], ['Merged', 22, 1, 'ln', '#6a9a9a'], ['Merged', 22, 0, 'ln', '#f8b838'], ['railroads', 22, 0, 'ln', '#5a18c0'], ['majrivers', 22, 0, 'ln', '#28b4e0', 2], ['rivers', 22, 0, 'ln', '#10b8f0', 2], ['Clipped', 24, 0, 'pt', '#a0f8f8', 5], ['miasta bristol bay', 24, 0, 'pt', '#a01008', 5], ['popp', 24, 0, 'pt', '#7890a8', 5], ['airports', 24, 0, 'air', ''], ['Matanuska-Susitna', 22, 0, 'sq', '#669c82'], ['100000ft', 22, 0, 'sq', '#c0c078'], ['bristol bay', 22, 0, 'sq', '#40ff9c'], ['regions', 22, 0, 'sq', '#0c4c84'], ['railroads', 22, 0, 'ln', '#f4d4a0'], ['100km', 22, 0, 'sq', '#e0d0b4'], ['alaska', 22, 1, 'sq', '#eee957']];
document.getElementById('layers').innerHTML = layers.map(([n, h, on, k, c, r]) => {
  const art = { tiny: `<svg class="sym tiny" viewBox="0 0 6 18"><rect x="1" y="8" width="4" height="2" fill="${c}"/></svg>`,
    pt: `<svg class="sym pt" viewBox="0 0 18 18"><circle cx="9" cy="9" r="${r}" fill="${c}" stroke="#333"/></svg>`,
    ln: `<svg class="sym" viewBox="0 0 18 18"><path d="M0 9.500h18" stroke="${c}" stroke-width="${r || 1}"/></svg>`,
    air: '<svg class="sym pt" viewBox="0 0 18 18"><g fill="none" stroke="#888"><circle cx="3" cy="14" r="1.200"/><circle cx="6" cy="6" r="1.200"/><circle cx="15" cy="2.500" r="1.200"/></g></svg>',
    sq: `<svg class="sym" viewBox="0 0 18 18"><rect x=".5" y=".5" width="17" height="17" fill="${c}" stroke="#333" stroke-opacity=".7"/></svg>` }[k];
  return `<div class="layer${on ? ' shown' : ''}${n === 'Vertices' ? ' sel' : ''}" style="height:${h}px">${use('closed', 'chev' + (n === 'airports' ? '' : ' none'))}${use(on ? 'boxon' : 'boxoff', 'box')}${art}<span>${n}</span></div>`;
}).join('');

// Processing toolbox
const alg = (n, i = 'gear') => `<div class="row alg${i === 'geardark' ? ' hit' : ''}">${use(i, 'ic')}<span>${n}</span></div>`;
const cat = (n, c = 'closed') => `<div class="row cat" style="padding-left:6px">${use(c, 'chev')}${use('q', 'ic')}<span>${n}</span></div>`;
const special = { 'Check validity': 'check', 'Delaunay triangulation': 'delaunay', 'Eliminate selected polygons': 'elim', 'Export geometry columns': 'export', 'Extract vertices': 'geardark', 'Lines to polygons': 'lines', 'Minimum bounding geometry': 'bound', 'Point on surface': 'surface', 'Points along geometry': 'along', 'Pole of inaccessibility': 'surface', 'Polygons to lines': 'lines', 'Voronoi polygons': 'voronoi' };
document.getElementById('toolbox').innerHTML = `<div class="row first" style="padding-left:6px">${use('down', 'chev')}<span>Recently used</span></div>`
  + alg('Line intersections') + alg('Explode lines') + alg('Split with lines') + alg('v.clean - Toolset for cleaning topology of vector map.', 'grass') + alg('Merge lines') + alg('Extract vertices')
  + 'Cartography|Database|File tools|Graphics|Interpolation|Layer tools|Network analysis|Raster analysis|Raster terrain analysis|Raster tools|Vector analysis|Vector creation|Vector general'.split('|').map(n => cat(n)).join('')
  + cat('Vector geometry', 'down')
  + 'Aggregate|Boundary|Bounding boxes|Buffer|Centroids|Check validity|Collect geometries|Concave hull|Convert geometry type|Convex hull|Create layer from extent|Delaunay triangulation|Delete holes|Densify by count|Densify by interval|Dissolve|Drop M/Z values|Eliminate selected polygons|Explode lines|Export geometry columns|Extend lines|Extract specific vertices|Extract vertices|Fix geometries|Geometry by expression|Keep N biggest parts|Lines to polygons|Merge lines|Minimum bounding geometry|Minimum enclosing circles|Multipart to singleparts|Offset line|Oriented minimum bounding box|Orthogonalize|Point on surface|Points along geometry|Points displacement|Pole of inaccessibility|Polygonize|Polygons to lines|Promote to multipart|Rectangles, ovals, diamonds (fixed)|Rectangles, ovals, diamonds (variable)|Remove duplicate vertices|Remove null geometries|Reverse line direction|Set M value|Set Z value|Simplify|Single sided buffer|Smooth|Snap geometries to layer|Snap points to grid|Subdivide|Tessellate|Transect|Translate|Voronoi polygons'.split('|').map(n => alg(n, special[n])).join('')
  + cat('Vector overlay') + cat('Vector selection') + cat('Vector table');

// Map data, stored per sheet: origin and units per pixel, then x,y pairs.
const sheets = { N: [1850, 470, 3, 1.8233], W: [1490, 1280, 2.8, 3], E: [2030, 1300, 2.8, 3], S: [1490, 1680, 2.8, 3] };
const pts = (s, str) => { const [ox, oy, sx, sy] = sheets[s]; return str.trim().split(/\s+/).map(p => { const [x, y] = p.split(',').map(Number); return [ox + x / sx, oy + y / sy]; }); };
const d = p => 'M' + p.map(q => q[0].toFixed(1) + ' ' + q[1].toFixed(1)).join('L');
const coast = [
  ...pts('S', '-20,445 8,440 47,430 46,420 57,407 40,380 27,361 50,349 98,344 104,309 90,298 78,290 75,297 55,290 81,284 80,262 90,247 92,275 104,295 130,284 143,240 136,178 155,208 164,216 178,223 163,225 164,235 149,279 187,292 184,262 194,259 206,283 215,283 238,268 246,250 275,241 289,175 284,143 260,143 242,161 220,150 196,158 195,148 222,121 240,122 278,106 346,113 376,92 398,34 413,15 406,8'),
  ...pts('W', '406,1208 421,1195 424,1170 386,1130 387,1108 305,1057 304,1030 290,1020 270,1022 252,1042 250,1033 270,1017 300,1014 318,1028 322,1048 345,1048 355,1053 334,1048 335,1062 366,1069 370,1055 385,1064 385,1055 404,1072 425,1066 448,1029 470,1020 484,976 527,944 501,922 495,897 502,865 546,817 555,815 557,800 568,800 575,775 583,762 578,728 586,750 624,716 626,705 640,704 641,688 683,715 692,710 659,621 684,578 677,563 692,568 722,532 757,502 803,500 813,486 860,470 866,438 900,375 922,362 925,345 930,354 1000,318 1007,284 1018,296 1032,298 1031,236 1039,242 1046,236 1041,265 1046,298 1060,318 1080,322 1122,314 1118,297 1126,298 1132,313 1163,307 1224,316 1242,299 1240,250 1250,210 1270,202 1283,170 1300,150 1325,133 1360,127 1399,113 1375,128 1355,140 1380,135 1368,150 1390,140 1400,132 1440,125 1440,135 1400,155 1370,180 1345,195 1330,203 1306,208 1303,243 1280,252 1262,285 1250,330 1240,340 1218,343 1200,375 1222,387 1232,398 1250,408 1262,430 1280,455 1310,480 1350,492 1390,500 1430,515 1480,505 1510,520 1550,575 1525,553 1505,547 1470,543 1430,543 1410,535 1390,530 1365,523 1345,530 1335,517 1320,513 1300,505 1277,506 1258,530 1218,542 1216,550 1158,535 1117,470 1105,465 1095,472 1013,526 908,641 837,663 828,684 787,707 817,806 836,822 850,824 844,842 858,836 850,830 838,830 835,835 835,942 806,954 799,1053 710,1193 666,1378 659,1380 668,1408 700,1440 738,1464 788,1473 808,1497 815,1495 790,1472 820,1443 842,1434 925,1355 948,1348 951,1360 970,1352 935,1385 942,1403 920,1404 914,1443 885,1465 897,1502 890,1517 886,1498 862,1497 862,1515 874,1521 872,1528 840,1528 835,1518 822,1535 810,1537'),
  ...pts('S', '805,357 828,362 836,368 844,390 826,370 800,372 860,425 820,408 800,388 785,390 790,402 770,388 738,382 720,403 729,443 708,403 665,427 656,447 697,472 704,498 690,482 652,474 650,484 637,487 631,510 636,546 668,552 657,567 688,582 728,568 727,580 710,575 713,610 768,608 773,600 754,590 775,577 800,582 808,572 775,562 816,555 818,540 828,545 830,530 858,567 863,550 881,573 888,558 911,572 929,560 929,537 856,502 890,506 905,515 915,508 930,520 951,490 953,515 970,520 960,545 975,575 965,552 982,551 1002,525 999,508 982,495 1008,483 1012,462 1035,452 1043,410 1055,405 1068,412 1090,405 1097,388 1070,374 1097,375 1097,357 1067,320 1088,323 1100,283 1118,280 1122,290 1110,325 1100,350 1118,345 1127,333 1118,370 1132,377 1155,305 1145,292 1158,300 1199,184 1207,186 1188,238 1195,255 1180,275 1187,285 1172,310 1180,318 1165,340 1180,340 1180,362 1158,372 1180,372 1188,352 1205,348 1200,320 1218,327 1230,312 1218,290 1257,285 1232,255 1252,262 1240,208 1252,225 1262,228 1275,258 1272,225 1285,230 1305,225 1307,195 1290,180 1267,150 1272,132 1290,148 1308,152 1315,172 1340,180 1355,225 1370,232 1355,205 1367,180 1353,150 1355,110 1340,110 1322,93 1345,93 1356,103 1367,63 1356,20 1372,18 1390,50 1385,100 1400,130 1392,135 1425,160 1410,165 1435,180 1425,155 1405,140 1400,110 1413,85 1410,55 1430,28 1448,32'),
  ...pts('W', '1450,1230 1455,1195 1470,1186 1450,1143 1449,1098 1470,1095 1485,1165 1497,1168 1490,1190 1500,1190 1503,1248 1511,1262'),
  ...pts('E', '12,1180 5,1172 20,1135 18,1108 32,1105 47,1080 67,1070 68,1082 47,1125 55,1138 75,1120 82,1140 107,1122 125,1152 142,1156 155,1132 205,1135 195,1145 215,1148 230,1120 220,1118 236,1105 232,1075 245,1095 258,1090 255,1115 270,1130 282,1075 273,1065 285,1010 282,990 290,960 308,975 310,1010 320,1025 345,1030 340,1040 310,1052 345,1055 305,1068 340,1075 360,1058 383,945 375,945 365,995 355,980 315,1008 350,975 368,930 345,920 350,950 333,975 335,915 325,905 305,915 300,935 295,935 330,912 260,967 288,915 268,910 265,895 280,892 285,915 310,895 325,885 328,860 318,835 305,855 303,830 320,832 345,870 345,835 375,812 350,825 335,800 355,815 360,790 370,805 403,775 403,765 385,760 398,745 360,740 388,730 388,710 360,710 365,685 340,663 320,700 325,740 318,735 325,685 300,715 300,775 290,740 280,750 270,735 245,710 230,700 205,710 160,787 155,778 185,720 245,680 250,710 262,705 280,720 285,690 313,657 290,590 297,550 285,552 262,590 260,625 238,655 230,635 245,625 235,600 247,575 240,555 247,545 230,545 195,560 180,590 155,635 145,630 160,580 185,550 215,530 180,545 175,550 145,550 143,545 160,518 190,515 205,503 228,508 240,520 253,520 234,488 258,500 272,440 250,410 272,420 278,395 297,375 295,330 245,345 240,365 210,405 230,365 218,350 235,350 260,328 288,322 290,302 300,303 298,320 328,372 345,345 378,245 392,232 405,195 428,177 415,215 432,210 435,225 390,265 365,320 372,325 360,375 330,425 335,445 322,455 315,500 320,523 330,520 355,525 365,495 382,515 390,490 370,440 340,422 372,430 382,445 400,495 430,500 440,480 415,480 428,455 415,425 430,425 430,412 447,408 442,455 465,435 465,468 485,460 488,435 480,400 460,395 475,360 453,350 480,352 487,300 478,262 495,255 485,265 498,300 512,310 497,325 497,432 515,430 512,355 522,362 535,350 520,390 548,372 535,405 550,405 540,422 557,440 575,425 568,402 588,405 580,355 590,362 600,345 595,380 620,405 625,378 605,378 630,345 655,350 655,370 668,345 678,360 655,380 690,385 730,310 727,290 735,302 758,290 783,230 790,242 840,225 850,232 880,227 895,252 775,272 772,295 800,300 802,308 832,325 768,310 758,352 775,365 802,370 800,376 750,360 747,370 780,435 790,408 800,445 810,425 825,425 812,445 825,458 870,450 912,425 917,392 978,425 930,402 920,430 937,437 858,478 825,485 830,505 812,490 818,520 810,505 805,520 780,512 800,548 840,540 852,552 895,510 905,470 912,512 930,485 945,510 955,490 975,485 982,447 993,482 980,483 978,500 960,505 925,560 930,574 950,572 1032,512 1012,535 1018,568 1045,515 1052,535 1040,555 1060,535 1070,548 1030,572 1090,560 1129,518 1100,610 1040,675 1065,685 1110,658 1170,672 1178,682 1245,678 1190,695 1190,705 1215,712 1250,738 1290,755 1263,740 1280,710 1325,610 1335,590 1375,570 1378,520 1390,520 1393,580 1383,600 1383,630 1398,632 1408,605 1398,635 1395,665 1403,670 1382,672 1380,700 1390,715 1382,755 1405,745 1430,738 1460,755 1475,775 1483,795 1500,812 1515,812 1530,798 1560,790 1560,3000'),
  [1460, 2300]
];
const islands = [
  ['W', '1134,403 1148,400 1173,370 1165,364 1150,370 1144,392'], ['W', '580,966 600,965 600,935 612,918 610,872 625,856 656,875 638,888 635,908 624,912 610,935 617,960 583,979'],
  ['W', '400,1102 404,1098 423,1110 427,1157 400,1120'], ['W', '1484,1220 1495,1216 1490,1245 1482,1240'], ['W', '1468,1272 1480,1270 1478,1288'],
  ['W', '1333,1412 1345,1435 1362,1458 1342,1440'], ['W', '1392,1393 1397,1408 1395,1430'],
  ['S', '108,480 120,458 150,440 165,447 178,475 172,495 155,507 125,506 108,495'], ['S', '785,362 790,345 793,357'], ['S', '671,617 693,602 696,628'], ['S', '722,640 732,631 754,638 752,650 737,652'], ['S', '790,616 822,630 821,645 792,628'],
  ['S', '1038,490 1038,465 1065,415 1085,420 1090,435 1075,490 1058,500 1052,485'], ['S', '1152,410 1165,385 1172,400 1162,425 1152,420'], ['S', '1152,440 1168,430 1166,444'], ['S', '1152,458 1160,450 1166,458'],
  ['S', '-20,700 8,697 20,687 50,692 60,684 97,737 118,746 133,738 146,760 157,760 178,786 155,805 165,811 187,791 187,815 197,822 178,832 210,828 211,840 201,847 184,840 173,855 160,918 151,938 136,938 110,954 100,973 97,993 70,1008 -20,1010'],
  ['S', '103,1018 107,1010 112,1016'], ['S', '519,790 533,768 527,756 548,770 581,766 540,796 522,797'], ['S', '611,765 632,766 615,787'], ['S', '630,787 650,783'], ['S', '687,1280 705,1240 718,1246 718,1290 700,1311 688,1298'],
  ['S', '418,1072 440,1055 460,1020 484,1013 484,992 497,1004 525,985 527,1020 512,1045 518,1065 482,1102 448,1096 425,1084'], ['S', '432,1015 446,999 448,1025'], ['S', '418,1040 427,1024 431,1038'], ['S', '417,1055 432,1048 434,1060'], ['S', '450,1030 457,1020 463,1028 455,1040'],
  ['S', '160,1398 186,1374 192,1345 214,1340 240,1373 273,1378 288,1420 295,1412 345,1445 284,1445 235,1420 212,1384 222,1408 177,1414'],
  ['S', '228,1328 230,1298 246,1288 280,1302 298,1298 305,1318 310,1303 356,1328 300,1290 278,1272 269,1253 288,1224 340,1250 342,1238 375,1240 386,1265 387,1245 397,1250 380,1230 370,1198 388,1214 371,1190 397,1194 375,1175 358,1174 358,1166 340,1150 377,1147 383,1162 377,1145 392,1112 407,1140 418,1098 436,1100 436,1120 445,1104 452,1115 477,1110 460,1143 475,1150 482,1197 493,1172 503,1180 502,1217 522,1190 523,1138 562,1186 578,1190 602,1154 615,1168 600,1222 600,1276 622,1214 628,1243 650,1186 660,1196 658,1268 632,1300 613,1326 600,1308 582,1307 565,1244 560,1258 537,1262 537,1280 550,1288 549,1306 522,1295 545,1312 540,1330 557,1338 535,1360 532,1348 512,1350 497,1335 470,1352 460,1375 452,1286 438,1325 435,1382 404,1403 390,1400 386,1380 373,1386 390,1414 383,1442 345,1440 300,1408 280,1370 292,1360 250,1365'],
  ['S', '326,1207 340,1198 360,1210 377,1235 342,1228'], ['S', '542,1134 552,1150 548,1158'],
  ['E', '367,568 383,562 390,552 400,575 411,588 410,607 398,600 392,610 382,590 370,585'], ['E', '445,603 450,580 452,592'], ['E', '533,547 550,537 562,540 548,550'], ['E', '556,568 568,556 570,572'], ['E', '533,578 560,572 580,588 593,590 578,615 562,602 552,622 540,625 552,607 534,600 550,590'],
  ['E', '300,552 326,550 330,575 340,612 325,627 313,640 290,585 320,590'], ['E', '502,667 515,658 519,690 510,688'], ['E', '490,685 505,718 495,715'],
  ['E', '470,712 482,708 485,740 500,718 502,735 490,745 510,765 480,790 508,792 498,835 505,850 483,870 492,897 488,925 470,960 450,940 475,930 460,908 430,915 428,870 455,880 475,845 430,848 432,825 460,835 452,812 430,795 450,738 455,775 475,760'], ['E', '413,905 420,880 424,918'],
  ['E', '343,860 358,855 360,832 378,828 385,808 393,825 388,882 358,885'], ['E', '363,1085 390,1015 405,1010 410,970 418,1000 432,985 440,1005 395,1045 370,1088'], ['E', '395,1112 455,1022 466,1042 440,1092 405,1120'], ['E', '333,1130 350,1115 343,1098 375,1110 408,1050 385,1110 362,1127'],
  ['E', '447,1224 458,1167 503,1148 480,1138 495,1105 515,1102 522,1088 510,1070 540,1052 555,1025 587,995 605,962 605,942 620,922 622,897 640,900 660,872 648,860 658,842 643,820 650,800 675,782 682,803 712,808 683,863 735,825 743,835 735,860 663,942 625,1010 611,1058 622,1085 600,1080 580,1103 580,1120 598,1128 600,1145 573,1175 568,1167 545,1167 527,1206 502,1205 466,1235'],
  ['E', '555,883 606,850 605,863 564,902'], ['E', '610,1150 612,1142 618,1146'],
  ['E', '797,762 808,738 820,705 830,690 850,687 848,702 870,697 880,703 900,684 913,692 913,736 985,708 1003,732 975,745 965,778 952,772 915,787 838,867 815,842 875,770 835,780 832,798 805,792'],
  ['E', '917,664 930,655 968,643 998,653 983,637 1027,595 1080,575 1090,585 1080,605 970,690 930,698 918,688'],
  ['E', '737,465 740,425 752,418 755,435 768,430 763,464'], ['E', '573,440 600,412 635,430 648,415 650,430 635,445 615,435'], ['E', '1060,720 1115,730 1112,738 1090,733'], ['E', '1160,745 1180,768 1205,765 1200,773 1177,772'], ['E', '1240,786 1282,798 1280,805'], ['E', '1297,795 1320,797 1320,805'], ['E', '1350,803 1385,797 1390,805'], ['E', '1405,791 1440,797 1435,802'], ['E', '1460,795 1483,795 1480,802'],
  ['E', '1325,655 1360,608 1362,640'], ['E', '1285,735 1305,705 1325,680 1300,745'], ['E', '1367,660 1382,640 1376,655'],
  ['E', '768,522 773,520 776,530'], ['E', '492,455 500,448 500,455'], ['E', '530,440 540,446 535,448'], ['E', '447,515 451,507 453,515'], ['E', '1016,682 1022,678 1024,683'], ['E', '1533,1068 1530,1078'],
  ['S', '163,733 169,730 168,735'], ['S', '578,747 584,745 583,750'], ['S', '619,805 625,802'], ['S', '452,983 458,982'], ['S', '1402,258 1405,250'], ['S', '1410,235 1412,228'], ['S', '1420,265 1422,262'], ['S', '1424,190 1426,188'], ['S', '1438,130 1440,142'], ['S', '33,683 42,698'], ['S', '55,677 60,683'], ['S', '103,466 116,462'], ['S', '495,1085 502,1080']
];
const rivers = [['E', '-40,58 -20,55 10,38 30,38 50,60 70,62 90,60 100,80 120,92 135,100 140,115'], ['E', '5,42 20,34 55,52 65,65 85,56 105,85 130,90 145,98 155,92 153,84']];
const rails = [
  ['N', '966,160 953,147 935,138 910,136 885,136 870,125 850,119 838,116'],
  ['N', '800,103 780,100 765,88 750,92 727,92 708,88 692,80 683,69 660,65 640,65 622,70 607,80 591,93'], ['N', '765,110 785,108 800,103'], ['N', '710,114 722,113'], ['N', '573,109 554,118 530,129 500,135 475,141 455,143 440,147 428,157 420,170'],
  ['N', '396,188 375,198 359,215 357,228 362,243'], ['N', '362,260 362,261'], ['N', '373,296 372,283'], ['N', '350,337 352,334 366,345'], ['N', '350,365 333,370 323,386'], ['N', '344,411 344,411'], ['N', '363,437 354,427'], ['N', '384,467 381,461'], ['N', '377,478 383,487 384,495'],
  ['N', '434,536 450,536 466,536'], ['N', '405,511 420,520 434,535 432,549 445,562 452,577 460,590 475,603 480,618 490,632 495,635 483,650 487,661 495,674 491,685 490,697 493,705 475,715 475,727 455,738 442,744 420,757 405,766 393,776'], ['N', '380,795 375,802 363,811'], ['N', '347,824 347,824'],
  ['N', '323,838 310,851 297,862 285,882 272,897 268,912 260,930 258,942 275,948 288,957 280,966'], ['N', '266,981 273,988 250,1006 257,1018 240,1032 220,1040 200,1056 180,1067 168,1079 150,1098 138,1113 144,1132 132,1155 138,1168 132,1187 144,1205'],
  ['N', '144,1237 147,1246'], ['N', '156,1264 160,1275 152,1288 165,1300 163,1318 173,1335 183,1350 180,1370'], ['N', '176,1402 177,1412 180,1430 190,1455 210,1475 230,1492 250,1497 270,1505 290,1515 330,1516 370,1520 396,1516 420,1522 459,1527'],
  ['W', '1464,72 1458,76 1436,84 1443,100 1445,125 1432,145 1408,148 1385,163 1365,187 1355,205 1347,222 1335,240 1335,258 1325,270 1307,280 1290,295 1280,312 1265,321'],
  ['W', '1244,360 1258,378 1262,395 1265,415'], ['W', '1279,432 1279,432'], ['W', '1292,457 1315,472 1345,480 1355,488 1383,483 1405,500 1434,522 1460,513 1489,502 1515,520 1540,550 1560,570 1560,610 1555,632 1540,667 1548,690 1545,725 1530,757 1517,773'],
  ['W', '1490,783 1470,788 1458,800'], ['W', '1451,833 1450,850 1455,888'], ['W', '1461,915 1467,945 1465,975 1465,1007'], ['W', '1463,1035 1454,1055 1447,1085'], ['E', '62,540 75,547 105,550 125,553 133,550']
];
const steps = [2.2, 5.6, 3.4, 6.4, 2.4, 4.6, 6.8, 2.6, 5.2];
const dots = rails.map(([s, str]) => {
  const p = pts(s, str), out = [p[0]];
  let need = steps[0], n = 0;
  for (let i = 1; i < p.length; i++) {
    const [a, b] = [p[i - 1], p[i]], len = Math.hypot(b[0] - a[0], b[1] - a[1]);
    let at = need;
    for (; at <= len; at += steps[++n % steps.length]) out.push([a[0] + (b[0] - a[0]) * at / len, a[1] + (b[1] - a[1]) * at / len]);
    need = at - len;
  }
  out.push(p[p.length - 1]);
  return out.map(q => `<circle class="vertex" cx="${q[0].toFixed(1)}" cy="${q[1].toFixed(1)}" r="4.800"/>`).join('');
}).join('');
const link = rails.filter(r => r[0] === 'N').slice(4).filter(r => !r[1].startsWith('434,536')).flatMap(([s, str]) => pts(s, str));
document.getElementById('map').innerHTML = `<path class="sea" d="${d(coast)}z"/>` + islands.map(([s, str]) => `<path class="land" d="${d(pts(s, str))}z"/>`).join('') + rivers.map(([s, str]) => `<path class="river" d="${d(pts(s, str))}"/>`).join('') + `<path class="rail" d="${d(link)}"/>` + dots;
```
